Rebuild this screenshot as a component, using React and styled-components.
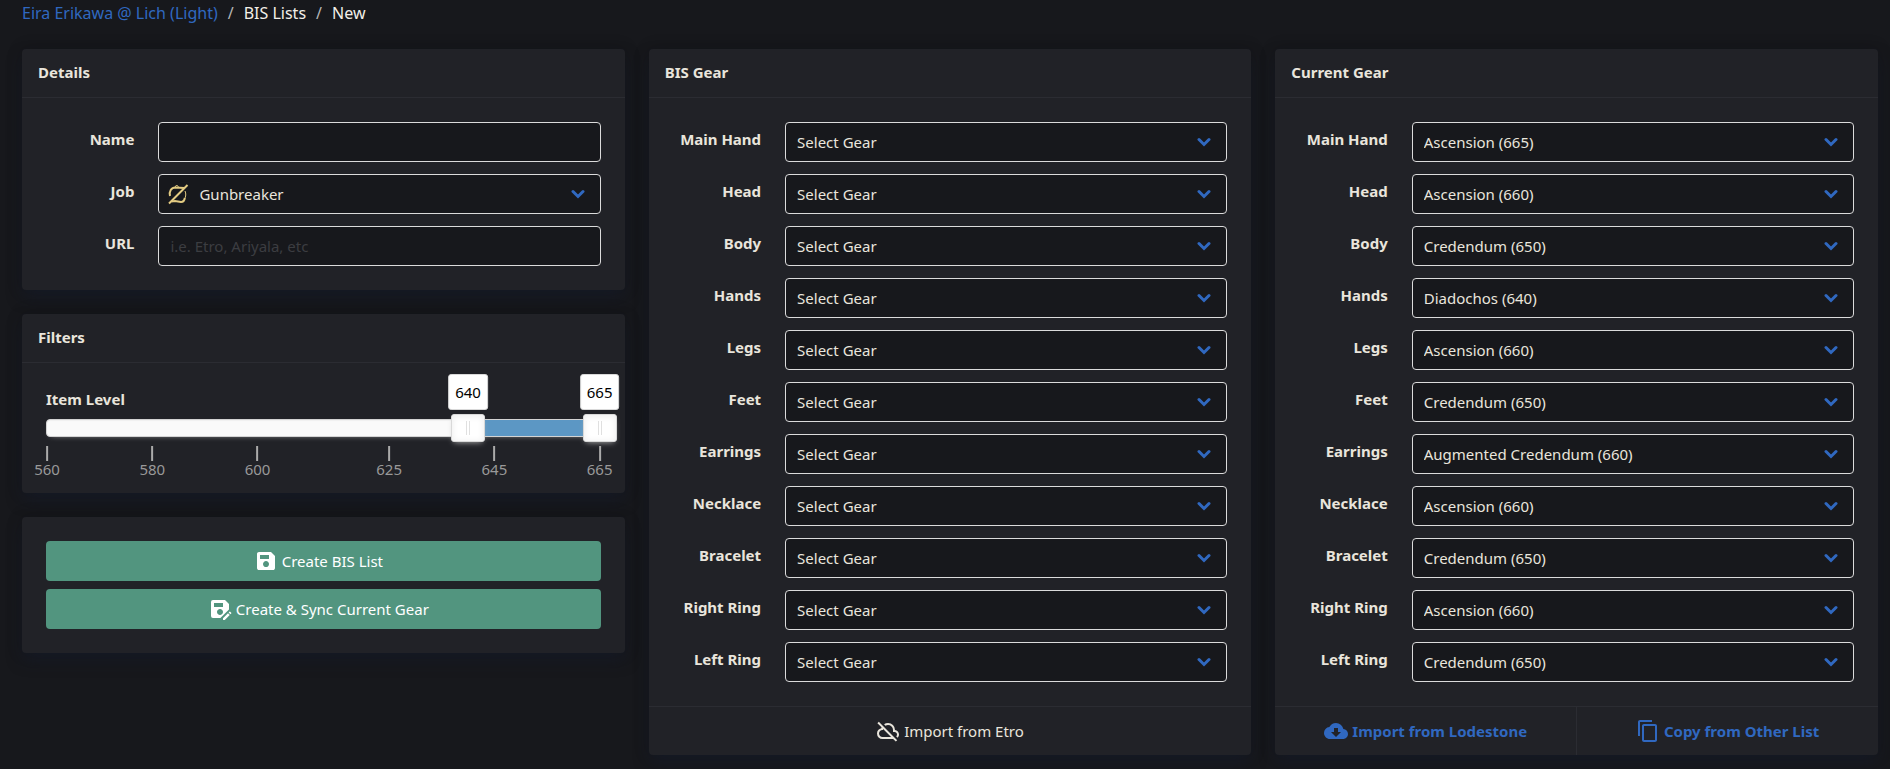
import React, { useId, useState } from "react";
import styled, { createGlobalStyle } from "styled-components";
import { MdCloudDownload, MdContentCopy, MdSaveAs } from "react-icons/md";

const GlobalStyle = createGlobalStyle`
  *, *::before, *::after { box-sizing: border-box; }
  body {
    margin: 0;
    background: #17181c;
    color: #e9e5dc;
    font-family: "Noto Sans", "Open Sans", sans-serif;
    font-size: 15px;
    line-height: 24px;
  }
  #root { overflow-x: hidden; }
  button, input, select { font: inherit; color: inherit; }
`;

const Page = styled.main`
  padding: 1px 12px 14px 22px;
`;

const Breadcrumb = styled.nav`
  margin-bottom: 24px;
  ol {
    display: flex;
    margin: 0;
    padding: 0;
    list-style: none;
  }
  li {
    font-size: 16px;
  }
  li + li::before {
    content: "/";
    margin: 0 10px;
    color: #b5b5b5;
  }
`;

const Crumb = styled.a`
  color: ${(p) => (p.$accent ? "#3068c0" : "#f2efe8")};
  text-decoration: none;
`;

const Columns = styled.div`
  display: grid;
  grid-template-columns: repeat(3, minmax(0, 1fr));
  align-items: start;
  gap: 24px;
`;

const Stack = styled.div`
  display: flex;
  flex-direction: column;
  gap: ${(p) => p.$gap}px;
`;

const Card = styled.section`
  background: #212227;
  border-radius: 4px;
  box-shadow: 0 8px 16px -2px rgba(22, 30, 50, 0.5), 0 0 16px rgba(10, 10, 12, 0.2);
`;

const CardHeader = styled.h2`
  margin: 0;
  padding: 11px 16px 13px;
  border-bottom: 1px solid #2b2c32;
  font-size: 15px;
  font-weight: 700;
`;

const CardBody = styled.div`
  padding: 24px;
`;

const CardFooter = styled.footer`
  display: flex;
  border-top: 1px solid #2b2c32;
`;

const FooterButton = styled.button`
  flex: 1;
  display: flex;
  align-items: center;
  justify-content: center;
  gap: 4px;
  padding: 12px;
  border: 0;
  background: none;
  color: ${(p) => (p.$accent ? "#3068c0" : "inherit")};
  font-weight: ${(p) => (p.$accent ? 700 : 400)};
  cursor: pointer;
  & + & { border-left: 1px solid #2b2c32; }
`;

const Field = styled.div`
  display: grid;
  grid-template-columns: minmax(0, 1fr) minmax(0, 5fr);
  gap: 24px;
`;

const FieldLabel = styled.label`
  padding-top: 5px;
  font-weight: 700;
  text-align: right;
  white-space: nowrap;
`;

const Control = styled.div`
  position: relative;
  > svg { position: absolute; pointer-events: none; }
`;

const TextInput = styled.input`
  display: block;
  width: 100%;
  height: 40px;
  padding: 0 11px;
  border: 1px solid #dbdbdb;
  border-radius: 4px;
  background: #17181c;
  &::placeholder { color: #3c3d41; opacity: 1; }
`;

const Select = styled.select`
  display: block;
  appearance: none;
  width: 100%;
  height: 40px;
  padding: 0 40px 0 ${(p) => (p.$icon ? 40 : 11)}px;
  border: 1px solid #dbdbdb;
  border-radius: 4px;
  background: #17181c;
`;

const Chevron = styled.svg`
  top: 15px;
  right: 16px;
`;

const JobMark = styled.svg`
  top: 9px;
  left: 9px;
`;

const SliderLabel = styled.div`
  margin-bottom: 8px;
  font-weight: 700;
`;

const Slider = styled.div`
  position: relative;
  height: 18px;
  margin-bottom: 32px;
  border: 1px solid #d3d3d3;
  border-radius: 4px;
  background: #fafafa;
  box-shadow: inset 0 1px 1px #f0f0f0, 0 3px 6px -5px #bbb;
`;

const Range = styled.div`
  position: absolute;
  top: 0;
  bottom: 0;
  background: #5c97c4;
`;

const RangeInput = styled.input`
  position: absolute;
  top: -6px;
  left: -17px;
  width: calc(100% + 34px);
  height: 28px;
  margin: 0;
  appearance: none;
  background: none;
  pointer-events: none;
  &::-webkit-slider-thumb {
    appearance: none;
    width: 34px;
    height: 28px;
    border: 1px solid #d9d9d9;
    border-radius: 3px;
    background:
      linear-gradient(#e0e0e0, #e0e0e0) 14px 6px / 1px 14px no-repeat,
      linear-gradient(#e0e0e0, #e0e0e0) 17px 6px / 1px 14px no-repeat,
      #fff;
    box-shadow: inset 0 0 1px #fff, inset 0 1px 7px #ebebeb, 0 3px 6px -3px #bbb;
    pointer-events: auto;
    cursor: ew-resize;
  }
`;

const Tooltip = styled.output`
  position: absolute;
  bottom: 26px;
  transform: translateX(-50%);
  padding: 5px 6px;
  border: 1px solid #d9d9d9;
  border-radius: 3px;
  background: #fff;
  color: #000;
`;

const Tick = styled.span`
  position: absolute;
  top: 26px;
  transform: translateX(-50%);
  display: flex;
  flex-direction: column;
  align-items: center;
  color: #999;
  &::before {
    content: "";
    width: 2px;
    height: 15px;
    margin-bottom: -4px;
    background: #aaa;
  }
`;

const ActionButton = styled.button`
  display: flex;
  align-items: center;
  justify-content: center;
  gap: 4px;
  width: 100%;
  height: 40px;
  padding: 0 16px 0 6px;
  border: 0;
  border-radius: 4px;
  background: #52957f;
  color: #fff;
  cursor: pointer;
`;

const ICONS = {
  save: "M21 7v12q0 .825-.588 1.413T19 21H5q-.825 0-1.413-.588T3 19V5q0-.825.588-1.413T5 3h12zm-9 11q1.25 0 2.125-.875T15 15t-.875-2.125T12 12t-2.125.875T9 15t.875 2.125T12 18m-6-8h9V6H6z",
  cloudOff:
    "m19.8 22.6l-2.65-2.6H6.5q-2.3 0-3.9-1.6T1 14.5q0-1.92 1.19-3.42q1.19-1.51 3.06-1.93q.08-.2.15-.39q.1-.19.15-.41L1.4 4.2l1.4-1.4l18.4 18.4M6.5 18h8.65L7.1 9.94q-.05.28-.07.55q-.03.23-.03.51h-.5q-1.45 0-2.47 1.03Q3 13.05 3 14.5T4.03 17q1.02 1 2.47 1m15.1.75l-1.45-1.4q.43-.35.64-.81T21 15.5q0-1.05-.73-1.77q-.72-.73-1.77-.73H17v-2q0-2.07-1.46-3.54Q14.08 6 12 6q-.67 0-1.3.16q-.63.17-1.2.52L8.05 5.23q.88-.6 1.86-.92Q10.9 4 12 4q2.93 0 4.96 2.04Q19 8.07 19 11q1.73.2 2.86 1.5q1.14 1.28 1.14 3q0 .93-.38 1.75q-.37.8-1.02 1.5",
};

function Icon({ name }) {
  return (
    <svg width="24" height="24" viewBox="0 0 24 24" fill="currentColor" aria-hidden="true">
      <path d={ICONS[name]} />
    </svg>
  );
}

function SelectField({ label, value, options = [value], icon }) {
  const id = useId();
  return (
    <Field>
      <FieldLabel htmlFor={id}>{label}</FieldLabel>
      <Control>
        <Select id={id} defaultValue={value} $icon={Boolean(icon)}>
          {options.map((o) => (
            <option key={o}>{o}</option>
          ))}
        </Select>
        {icon}
        <Chevron
          width="14"
          height="10"
          viewBox="0 0 14 10"
          fill="none"
          stroke="#3068c0"
          strokeWidth="3"
          strokeLinecap="round"
          aria-hidden="true"
        >
          <path d="M2 2.5L7 7.5L12 2.5" />
        </Chevron>
      </Control>
    </Field>
  );
}

function TextField({ label, placeholder }) {
  const id = useId();
  return (
    <Field>
      <FieldLabel htmlFor={id}>{label}</FieldLabel>
      <Control>
        <TextInput id={id} type="text" placeholder={placeholder} />
      </Control>
    </Field>
  );
}

const gunbreaker = (
  <JobMark width="22" height="22" viewBox="0 0 22 22" fill="none" stroke="#e3cb82" aria-hidden="true">
    <path d="M20.5 2L2 20.5" strokeWidth="2" />
    <path d="M3 13C2 8.5 4 4.5 8.5 4.5L17 5" strokeWidth="2" />
    <path d="M7.5 4.5L9.7 2L12 4.5" strokeWidth="1" />
    <path d="M4.5 18.5L8 18L14 19C16.5 19 17.5 17 17.8 15" strokeWidth="2" />
    <path d="M18 8C19.2 10.5 19 13.5 17.5 16" strokeWidth="1" />
  </JobMark>
);

const MIN = 560;
const MAX = 665;
const percent = (level) => `${((level - MIN) / (MAX - MIN)) * 100}%`;

function ItemLevelSlider() {
  const [range, setRange] = useState([640, 665]);
  const change = (i) => (e) => {
    const next = [...range];
    next[i] = Number(e.target.value);
    if (next[0] <= next[1]) setRange(next);
  };
  return (
    <div role="group" aria-label="Item Level">
      <SliderLabel>Item Level</SliderLabel>
      <Slider>
        <Range style={{ left: percent(range[0]), width: percent(MIN + range[1] - range[0]) }} />
        {range.map((level, i) => (
          <React.Fragment key={i}>
            <RangeInput
              type="range"
              min={MIN}
              max={MAX}
              value={level}
              onChange={change(i)}
              aria-label={i ? "Maximum item level" : "Minimum item level"}
            />
            <Tooltip style={{ left: percent(level) }}>{level}</Tooltip>
          </React.Fragment>
        ))}
        {[560, 580, 600, 625, 645, 665].map((level) => (
          <Tick key={level} style={{ left: percent(level) }}>
            {level}
          </Tick>
        ))}
      </Slider>
    </div>
  );
}

const GEAR = [
  ["Main Hand", "Ascension (665)"],
  ["Head", "Ascension (660)"],
  ["Body", "Credendum (650)"],
  ["Hands", "Diadochos (640)"],
  ["Legs", "Ascension (660)"],
  ["Feet", "Credendum (650)"],
  ["Earrings", "Augmented Credendum (660)"],
  ["Necklace", "Ascension (660)"],
  ["Bracelet", "Credendum (650)"],
  ["Right Ring", "Ascension (660)"],
  ["Left Ring", "Credendum (650)"],
];

export default function App() {
  return (
    <>
      <GlobalStyle />
      <Page>
        <Breadcrumb aria-label="Breadcrumb">
          <ol>
            <li><Crumb href="#character" $accent>Eira Erikawa @ Lich (Light)</Crumb></li>
            <li><Crumb href="#lists">BIS Lists</Crumb></li>
            <li><Crumb href="#new" aria-current="page">New</Crumb></li>
          </ol>
        </Breadcrumb>
        <Columns>
          <Stack $gap={24}>
            <Card>
              <CardHeader>Details</CardHeader>
              <CardBody>
                <Stack $gap={12}>
                  <TextField label="Name" />
                  <SelectField label="Job" value="Gunbreaker" icon={gunbreaker} />
                  <TextField label="URL" placeholder="i.e. Etro, Ariyala, etc" />
                </Stack>
              </CardBody>
            </Card>
            <Card>
              <CardHeader>Filters</CardHeader>
              <CardBody>
                <ItemLevelSlider />
              </CardBody>
            </Card>
            <Card>
              <CardBody>
                <Stack $gap={8}>
                  <ActionButton type="button"><Icon name="save" />Create BIS List</ActionButton>
                  <ActionButton type="button"><MdSaveAs size={24} />Create &amp; Sync Current Gear</ActionButton>
                </Stack>
              </CardBody>
            </Card>
          </Stack>
          <Card>
            <CardHeader>BIS Gear</CardHeader>
            <CardBody>
              <Stack $gap={12}>
                {GEAR.map(([slot, item]) => (
                  <SelectField key={slot} label={slot} value="Select Gear" options={["Select Gear", item]} />
                ))}
              </Stack>
            </CardBody>
            <CardFooter>
              <FooterButton type="button"><Icon name="cloudOff" />Import from Etro</FooterButton>
            </CardFooter>
          </Card>
          <Card>
            <CardHeader>Current Gear</CardHeader>
            <CardBody>
              <Stack $gap={12}>
                {GEAR.map(([slot, item]) => (
                  <SelectField key={slot} label={slot} value={item} />
                ))}
              </Stack>
            </CardBody>
            <CardFooter>
              <FooterButton type="button" $accent><MdCloudDownload size={24} />Import from Lodestone</FooterButton>
              <FooterButton type="button" $accent><MdContentCopy size={24} />Copy from Other List</FooterButton>
            </CardFooter>
          </Card>
        </Columns>
      </Page>
    </>
  );
}
